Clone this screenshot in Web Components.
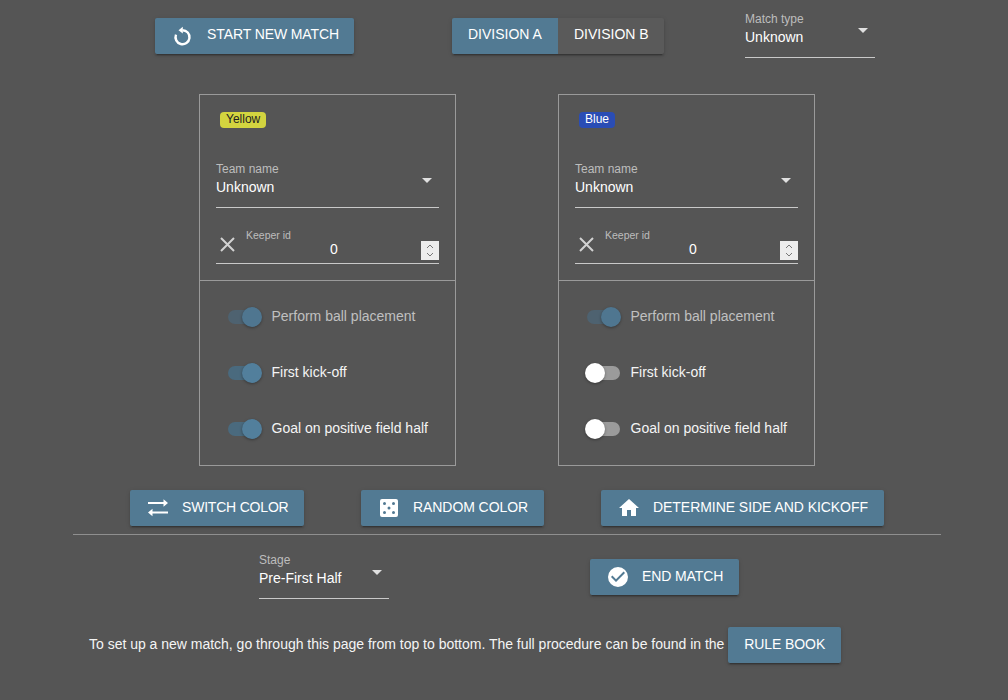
<!DOCTYPE html>
<html><head><meta charset="utf-8"><style>
html,body{margin:0;height:100%;background:#555;color:#fff;font:14px/20px "Liberation Sans",Arial,sans-serif;overflow:hidden}
body{display:flex;flex-direction:column;width:1008px;height:700px}
.row{display:flex;align-items:flex-start}
</style></head><body>
<template id="t-btn"><style>
:host{display:inline-flex;flex:none;box-sizing:border-box;height:36px;background:#527a93;border-radius:2px;align-items:center;padding:0 0 0 16px;font-size:14px;color:#fff;white-space:nowrap;box-shadow:0 3px 1px -2px rgba(0,0,0,.2),0 2px 2px 0 rgba(0,0,0,.14),0 1px 5px 0 rgba(0,0,0,.12)}
span{display:block;margin-top:var(--tm,-2px)}
.i{display:flex;width:24px;height:24px;margin-right:12px}
</style><div class="i" id="i"><slot name="icon"></slot></div><span><slot></slot></span></template>

<template id="t-toggle"><style>
:host{display:inline-flex;flex:none;height:36px;border-radius:2px;font-size:14px;box-shadow:0 3px 1px -2px rgba(0,0,0,.2),0 2px 2px 0 rgba(0,0,0,.14),0 1px 5px 0 rgba(0,0,0,.12);overflow:hidden;background:#5a5a5a}
div{display:flex;align-items:center;box-sizing:border-box;height:36px;padding:0 16px 4px;white-space:nowrap}
.a{background:#527a93;width:106px}.b{width:106px}
</style><div class="a">DIVISION A</div><div class="b">DIVISION B</div></template>

<template id="t-select"><style>
:host{display:block;position:relative;box-sizing:border-box;width:130px;height:48px;border-bottom:1px solid #c9c9c9;flex:none}
.l{position:absolute;left:0;top:var(--lt,1px);font-size:12px;line-height:16px;color:#bdbdbd}
.v{position:absolute;left:0;top:var(--vt,17px);font-size:14px;line-height:20px;color:#fff}
svg{position:absolute;right:7px;top:18px}
</style><div class="l"><slot name="label"></slot></div><div class="v"><slot></slot></div><svg width="10" height="5" viewBox="0 0 10 5"><path d="M0 0h10L5 5z" fill="#e0e0e0"/></svg></template>

<template id="t-switch"><style>
:host{display:flex;align-items:center;height:56px;box-sizing:border-box;padding-left:27px;font-size:14px;color:#f4f4f4;white-space:nowrap}
:host([dis]){color:#c0c0c0}
.s{position:relative;width:36px;height:22px;margin-right:8.500px;margin-top:2px;flex:none}
.t{position:absolute;left:1px;top:4px;width:33px;height:14px;border-radius:7px;background:#9b9b9b}
.k{position:absolute;left:-1px;top:1px;width:20px;height:20px;border-radius:50%;background:#fff;box-shadow:0 1px 3px rgba(0,0,0,.35)}
:host([on]) .t{background:#4a6a7e}
:host([on]) .k{left:15px;background:#527f9c}
:host([dis]) .t{background:#4e6270}
:host([dis]) .k{background:#4f7690}
span{display:block;margin-top:-1px}
</style><div class="s"><div class="t"></div><div class="k"></div></div><span><slot></slot></span></template>

<template id="t-team"><style>
:host{display:block;box-sizing:border-box;width:257px;height:372px;border:1px solid #9a9a9a;flex:none}
.top{box-sizing:border-box;height:186px;border-bottom:1px solid #9a9a9a;padding:17px 16px 0}
.chip{display:block;width:fit-content;height:16px;line-height:15px;font-size:12px;padding:0 6px;border-radius:4px;margin-left:4px}
x-select{width:223px;margin-top:32px}
.k{position:relative;width:223px;height:48px;margin-top:8px;border-bottom:1px solid #c9c9c9;box-sizing:border-box}
.x{position:absolute;left:4px;top:21px}
.kl{position:absolute;left:30px;top:11px;font-size:10.500px;line-height:16px;color:#bdbdbd}
.kv{position:absolute;left:114px;top:23px;font-size:14px;line-height:20px}
.sp{position:absolute;right:0;top:25px;width:18px;height:19px;background:#ededed}
.sw{padding-top:7px}
</style><div class="top"><span class="chip" id="c"><slot name="name"></slot></span>
<x-select><span slot="label">Team name</span>Unknown</x-select>
<div class="k"><svg class="x" width="15" height="15" viewBox="0 0 15 15"><path d="M1 1l13 13M14 1L1 14" stroke="#d2d2d2" stroke-width="2" fill="none"/></svg><div class="kl">Keeper id</div><div class="kv">0</div><svg class="sp" viewBox="0 0 18 19"><path d="M6 7l3-3 3 3M6 12l3 3 3-3" stroke="#777" fill="none"/></svg></div></div>
<div class="sw"><slot></slot></div></template>

<x-app style="display:contents">
<div class="row" style="padding:18px 0 0 155px;height:94px;box-sizing:border-box">
  <x-btn icon style="--tm:-4px;letter-spacing:-.1px;width:199px"><svg slot="icon" width="24" height="24" viewBox="0 0 24 24"><path d="M11.500 6.200a7 7 0 1 1-6.500 4.400" fill="none" stroke="#fff" stroke-width="2.400"/><path fill="#fff" d="M11.800 2.800v6.800L7.500 6.200z"/></svg>START NEW MATCH</x-btn>
  <x-toggle style="margin-left:98px"></x-toggle>
  <x-select style="margin-left:81px;margin-top:-8px"><span slot="label">Match type</span>Unknown</x-select>
</div>
<div class="row" style="padding:0 0 0 199px;gap:102px">
  <x-team><span slot="name" style="color:#222">Yellow</span>
    <x-switch on dis>Perform ball placement</x-switch><x-switch on>First kick-off</x-switch><x-switch on>Goal on positive field half</x-switch></x-team>
  <x-team blue><span slot="name">Blue</span>
    <x-switch on dis>Perform ball placement</x-switch><x-switch>First kick-off</x-switch><x-switch>Goal on positive field half</x-switch></x-team>
</div>
<div class="row" style="padding:24px 0 0 130px;gap:57px">
  <x-btn icon style="letter-spacing:-.2px;width:174px"><svg slot="icon" width="24" height="24" viewBox="0 0 24 24"><path fill="#fff" d="M2 6h15.500V3.200L22 7l-4.500 3.800V8H2zM22 15.500H6.500v-2.800L2 16.500l4.500 3.800v-2.800H22z"/></svg>SWITCH COLOR</x-btn>
  <x-btn icon style="letter-spacing:-.07px;width:183px"><svg slot="icon" width="24" height="24" viewBox="0 0 24 24"><path fill="#fff" fill-rule="evenodd" d="M5 3h14a2 2 0 0 1 2 2v14a2 2 0 0 1-2 2H5a2 2 0 0 1-2-2V5a2 2 0 0 1 2-2zM7.500 6a1.500 1.500 0 1 0 0 3 1.500 1.500 0 0 0 0-3zM16.500 6a1.500 1.500 0 1 0 0 3 1.500 1.500 0 0 0 0-3zM12 10.500a1.500 1.500 0 1 0 0 3 1.500 1.500 0 0 0 0-3zM7.500 15a1.500 1.500 0 1 0 0 3 1.500 1.500 0 0 0 0-3zM16.500 15a1.500 1.500 0 1 0 0 3 1.500 1.500 0 0 0 0-3z"/></svg>RANDOM COLOR</x-btn>
  <x-btn icon style="letter-spacing:-.05px;width:283px"><svg slot="icon" width="24" height="24" viewBox="0 0 24 24"><path fill="#fff" d="M10 20v-6h4v6h5v-8h3L12 3 2 12h3v8z"/></svg>DETERMINE SIDE AND KICKOFF</x-btn>
</div>
<div style="margin:8px 0 0 73px;width:868px;height:1px;background:#8f8f8f"></div>
<div class="row" style="padding:17px 0 0 259px">
  <x-select style="--lt:0px;--vt:16px;height:47px"><span slot="label">Stage</span>Pre-First Half</x-select>
  <x-btn icon style="margin:7px 0 0 201px;letter-spacing:-.1px;width:149px"><svg slot="icon" width="24" height="24" viewBox="0 0 24 24"><path fill="#fff" d="M12 2a10 10 0 1 0 0 20 10 10 0 0 0 0-20zm-2 15-5-5 1.400-1.400L10 14.200l7.600-7.600L19 8z"/></svg>END MATCH</x-btn>
</div>
<div class="row" style="padding:28px 0 0 89px;align-items:center">
  <span style="white-space:nowrap;letter-spacing:-.01px;margin-top:-2px;color:#f4f4f4">To set up a new match, go through this page from top to bottom. The full procedure can be found in the</span>
  <x-btn style="margin-left:4px;letter-spacing:-.1px;width:113px">RULE BOOK</x-btn>
</div>
</x-app>
<script>
class Base extends HTMLElement{
  constructor(){super();const id=this.constructor.tid;this.attachShadow({mode:'open'}).appendChild(document.getElementById(id).content.cloneNode(true));}
}
class XSelect extends Base{static tid='t-select'}
class XBtn extends Base{static tid='t-btn';connectedCallback(){if(!this.hasAttribute('icon'))this.shadowRoot.getElementById('i').style.display='none';}}
class XToggle extends Base{static tid='t-toggle'}
class XSwitch extends Base{static tid='t-switch'}
class XTeam extends Base{static tid='t-team';connectedCallback(){const c=this.shadowRoot.getElementById('c');if(this.hasAttribute('blue')){c.style.background='#2a4db5';c.style.color='#fff';}else{c.style.background='#d3d43f';}}}
class XApp extends HTMLElement{}
customElements.define('x-select',XSelect);customElements.define('x-btn',XBtn);customElements.define('x-toggle',XToggle);customElements.define('x-switch',XSwitch);customElements.define('x-team',XTeam);customElements.define('x-app',XApp);
</script>
</body></html>
